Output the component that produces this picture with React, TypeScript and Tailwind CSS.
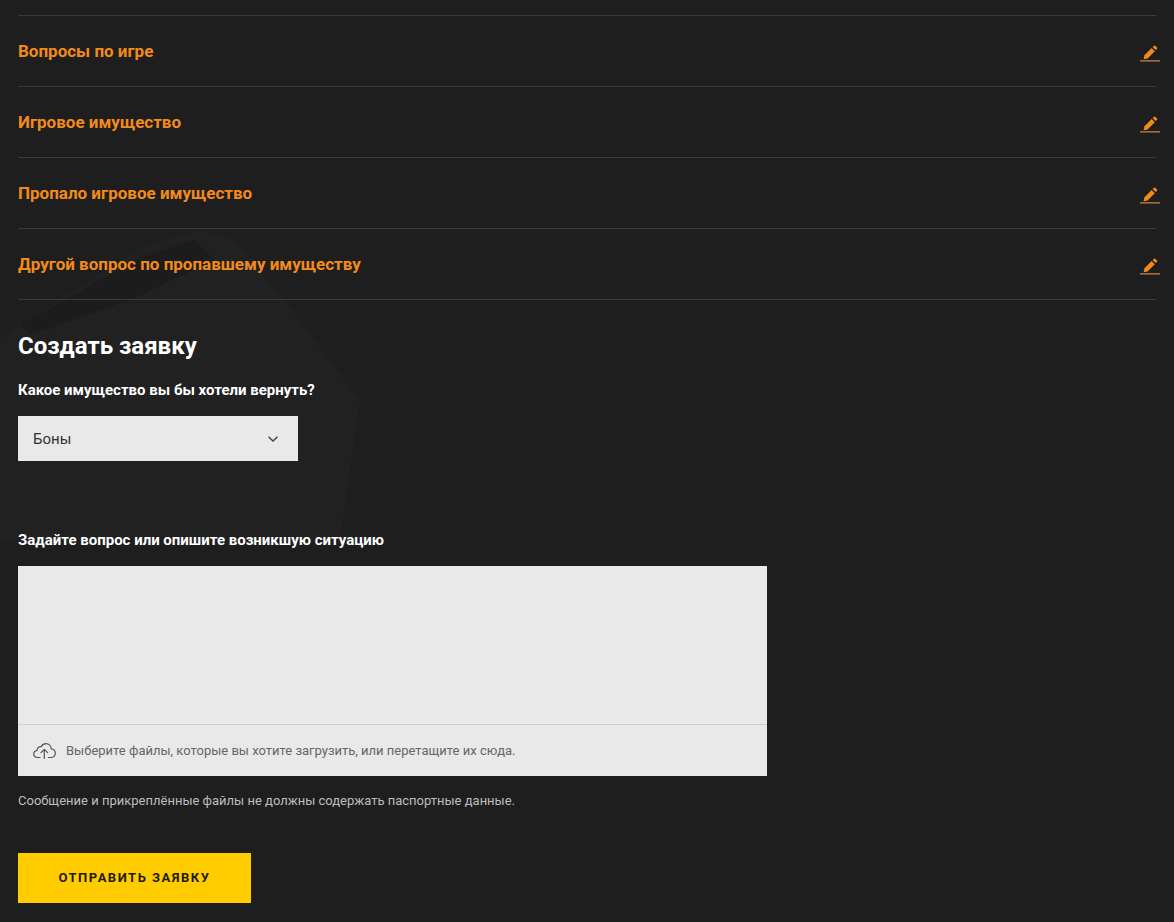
import React from "react";

const rows = ["Вопросы по игре", "Игровое имущество", "Пропало игровое имущество", "Другой вопрос по пропавшему имуществу"];

function Pencil() {
  return (
    <svg width="20" height="17" viewBox="0 0 20 17" className="block">
      <path d="M4.5 10.2 L11.6 3 L14.8 6.2 L7.6 13.4 L3.6 14.2 Z" fill="#f28a1c" />
      <path d="M12.6 2 L14 0.7 Q14.6 0.2 15.2 0.7 L17 2.5 Q17.5 3.1 17 3.7 L15.7 5.1 Z" fill="#f28a1c" />
      <rect x="0" y="15.4" width="20" height="1" fill="#f0a050" />
    </svg>
  );
}

export default function App() {
  return (
    <div className="relative h-[922px] overflow-hidden bg-[#1e1e1e] font-['Roboto',sans-serif]">
      <svg className="absolute left-0 top-[200px] pointer-events-none" width="420" height="340" viewBox="0 0 420 340">
        <path d="M0 138 L140 48 L200 30 L235 40 L300 120 L360 200 L340 340 L0 340 Z" fill="#212121" />
        <path d="M20 125 L140 58 L195 40 L215 60 L130 100 L30 135 Z" fill="#1c1c1c" />
      </svg>
      <div className="relative px-[18px] pt-[15px]">
        <div className="border-b border-[#3a3a3a]">
          {rows.map((r) => (
            <div key={r} className="flex h-[71px] items-start justify-between border-t border-[#3a3a3a] pt-[23px]">
              <span className="text-[17px] font-bold leading-[24px] text-[#f28a1c]">{r}</span>
              <span className="mr-[-4px] mt-[6px]"><Pencil /></span>
            </div>
          ))}
        </div>
        <h2 className="mt-[30px] text-[24px] font-bold leading-[32px] text-white">Создать заявку</h2>
        <div className="mt-[18px] text-[15px] font-bold leading-[20px] text-white">Какое имущество вы бы хотели вернуть?</div>
        <div className="mt-[16px] flex h-[45px] w-[280px] items-center justify-between bg-[#e9e9e9] pl-[15px] pr-[20px]">
          <span className="text-[15px] leading-[20px] text-[#333]">Боны</span>
          <svg width="10" height="6" viewBox="0 0 10 6" fill="none" stroke="#444" strokeWidth="1.5">
            <path d="M0.5 0.7 L5 5 L9.5 0.7" />
          </svg>
        </div>
        <div className="mt-[69px] text-[15px] font-bold leading-[20px] text-white">Задайте вопрос или опишите возникшую ситуацию</div>
        <div className="mt-[16px] flex h-[210px] w-[749px] flex-col bg-[#e9e9e9]">
          <div className="h-[159px] border-b border-[#cfcfcf]" />
          <div className="flex flex-1 items-center pl-[15px]">
            <svg width="23" height="16" viewBox="0 0 23 16" fill="none" stroke="#555" strokeWidth="1.2" strokeLinejoin="round" strokeLinecap="round">
              <path d="M7 14.5 H4.8 C2 14.5 0.7 12.6 0.7 11 C0.7 9.1 2.1 7.8 3.9 7.6 C4.3 4.9 6.2 3.4 8.2 3.6 C9.4 1.6 11.2 0.7 13 0.7 C15.9 0.7 18 3 18.2 5.8 C20.6 6 22.3 7.9 22.3 10.2 C22.3 12.6 20.5 14.5 18 14.5 H15.5" />
              <path d="M11.3 15.5 V6.5 M8 9.6 L11.3 6.3 L14.6 9.6" />
            </svg>
            <span className="ml-[10px] text-[13px] leading-[18px] text-[#666]">Выберите файлы, которые вы хотите загрузить, или перетащите их сюда.</span>
          </div>
        </div>
        <div className="mt-[16px] text-[13px] leading-[18px] text-[#bdbdbd]">Сообщение и прикреплённые файлы не должны содержать паспортные данные.</div>
        <button className="mt-[43px] block h-[50px] w-[233px] bg-[#ffcc00] text-[13px] font-bold tracking-[1.5px] text-[#221a00]">ОТПРАВИТЬ ЗАЯВКУ</button>
      </div>
    </div>
  );
}
